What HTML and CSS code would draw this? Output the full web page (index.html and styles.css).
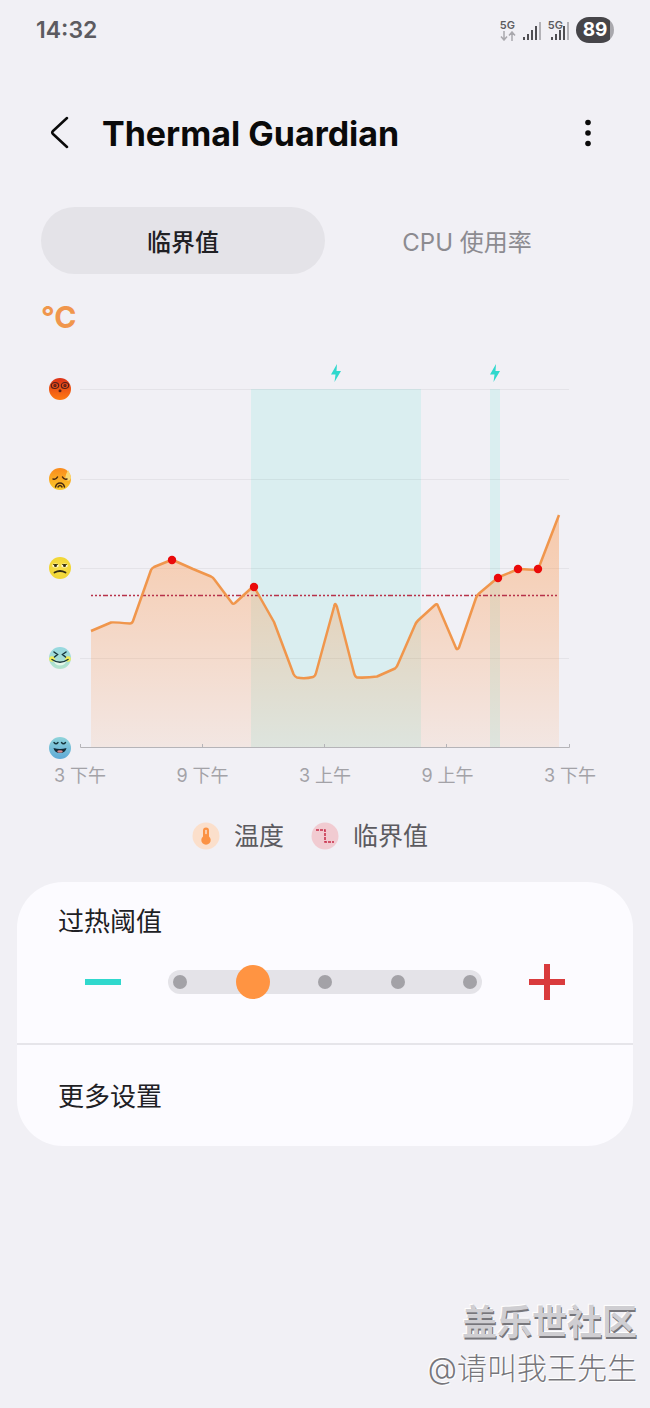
FILE: index.html
```html
<!DOCTYPE html>
<html lang="zh-CN">
<head>
    <meta charset="UTF-8">
    <meta name="viewport" content="width=device-width, initial-scale=1.0">
    <title>Thermal Guardian</title>
    <link rel="stylesheet" href="styles.css">
</head>
<body>

<!-- Status bar -->
<div class="status-bar">
    <span class="clock">14:32</span>
    <div class="status-icons">
        <div class="network">
            <span>5G</span>
            <svg width="16" height="10" viewBox="0 0 16 10" fill="none" stroke="#a9a8ad" stroke-width="1.500">
                <path d="M4 0v8.500M1 5.500l3 3.500L7 5.500M12 10V1.500M9 4.500l3-3.500L15 4.500"/>
            </svg>
        </div>
        <svg class="signal" width="18" height="18" viewBox="0 0 18 18">
            <path fill="#4f4e52" d="M0 15h2v3H0zM4 12h2v6H4zM8 8h2v10H8zM12 4h2v14h-2z"/>
            <path fill="#b3b2b7" d="M16 0h2v18h-2z"/>
        </svg>
        <div class="network network-2">
            <span>5G</span>
            <svg class="signal" width="18" height="18" viewBox="0 0 18 18">
                <path fill="#4f4e52" d="M0 15h2v3H0zM4 12h2v6H4zM8 8h2v10H8zM12 4h2v14h-2z"/>
                <path fill="#b3b2b7" d="M16 0h2v18h-2z"/>
            </svg>
        </div>
        <span class="battery">89</span>
    </div>
</div>

<!-- Title -->
<header class="header">
    <button type="button" class="icon-btn" aria-label="返回">
        <svg width="20" height="34" viewBox="0 0 20 34" fill="none" stroke="#0a0a0a" stroke-width="2.5" stroke-linecap="round" stroke-linejoin="round">
            <path d="M17 2L3 15q-1.500 1.500 0 3L17 31"/>
        </svg>
    </button>
    <h1>Thermal Guardian</h1>
    <button type="button" class="icon-btn" aria-label="更多选项">
        <svg width="8" height="28" viewBox="0 0 8 28" fill="#0a0a0a">
            <circle cx="4" cy="3.5" r="2.8"/><circle cx="4" cy="14" r="2.8"/><circle cx="4" cy="24.5" r="2.8"/>
        </svg>
    </button>
</header>

<div class="tabs">
    <button type="button" class="tab active">临界值</button>
    <button type="button" class="tab">CPU 使用率</button>
</div>

<!-- Temperature chart -->
<section class="chart">
    <h2>°C</h2>
    <svg class="plot" viewBox="0 0 650 410">
        <defs>
            <linearGradient id="heat" gradientUnits="userSpaceOnUse" x1="0" y1="165" x2="0" y2="398">
                <stop offset="0" stop-color="#ff8f3c" stop-opacity=".4"/>
                <stop offset="1" stop-color="#ff8f3c" stop-opacity=".1"/>
            </linearGradient>
            <linearGradient id="red" x1="0" y1="0" x2="0" y2="1">
                <stop offset="0" stop-color="#dc3218"/><stop offset="1" stop-color="#ff7a12"/>
            </linearGradient>
            <linearGradient id="amber" x1="0" y1="0" x2="0" y2="1">
                <stop offset="0" stop-color="#fa8a1c"/><stop offset="1" stop-color="#fbcb2c"/>
            </linearGradient>
            <radialGradient id="yellow">
                <stop offset="0" stop-color="#f8df4c"/><stop offset="1" stop-color="#f1d634"/>
            </radialGradient>
            <linearGradient id="mint" x1="0" y1="0" x2="0" y2="1">
                <stop offset="0" stop-color="#96d8e0"/><stop offset="1" stop-color="#b4e3cc"/>
            </linearGradient>
            <linearGradient id="blue" x1="0" y1="0" x2="0" y2="1">
                <stop offset="0" stop-color="#8fd4da"/><stop offset="1" stop-color="#5fa9d6"/>
            </linearGradient>
        </defs>

        <!-- charging periods -->
        <g fill="#daeef0">
            <rect x="251" y="39" width="170" height="359"/>
            <rect x="490" y="39" width="10" height="359"/>
        </g>
        <g fill="#30d8cd">
            <path id="bolt" d="M337 14l-6 10.500h4.500L334.500 32l6.500-11h-4.500z"/>
            <use href="#bolt" x="159"/>
        </g>

        <path d="M80 39.500H569M80 129.500H569M80 218.500H569M80 308.500H569" stroke="#000" stroke-opacity=".05"/>

        <path fill="url(#heat)" d="M91 281L111 272.500Q113 272 130 273.500Q132 273.500 133 271L151 220Q152 218 154 217L170 210.500Q172 209.500 174 210.500L193 219L211 226.500Q213 227.500 214 229L232 253Q233 254.500 235 253L252 237.500Q254 236 255 238.500L274 272L293.500 324Q295 327 297 327.500Q305 329 313 327Q315 326.500 316 323L334 257Q335 251 337 257L354 323Q355 327 357 327.500Q367 328 377 326.500L395 318.500Q397 317 398 314L415 275Q416 272.500 418 270.500L435 255Q437 253 438 256L456 298Q457 300.500 459 297.500L476 248Q477 245.500 479 243.500L498 227.500L516 220Q518 219 520 219L536 220Q538 220 539 217L559 165V398H91z"/>
        <path fill="none" stroke="#b8324a" stroke-width="1.600" stroke-dasharray="2 2 2 2 2 2 5 2" d="M91 245.500H559"/>
        <path fill="none" stroke="#f0964c" stroke-width="2.500" stroke-linejoin="round" d="M91 281L111 272.500Q113 272 130 273.500Q132 273.500 133 271L151 220Q152 218 154 217L170 210.500Q172 209.500 174 210.500L193 219L211 226.500Q213 227.500 214 229L232 253Q233 254.500 235 253L252 237.500Q254 236 255 238.500L274 272L293.500 324Q295 327 297 327.500Q305 329 313 327Q315 326.500 316 323L334 257Q335 251 337 257L354 323Q355 327 357 327.500Q367 328 377 326.500L395 318.500Q397 317 398 314L415 275Q416 272.500 418 270.500L435 255Q437 253 438 256L456 298Q457 300.500 459 297.500L476 248Q477 245.500 479 243.500L498 227.500L516 220Q518 219 520 219L536 220Q538 220 539 217L559 165"/>

        <g fill="#ea0a0a">
            <circle cx="172" cy="210" r="4.200"/>
            <circle cx="254" cy="237" r="4.200"/>
            <circle cx="498" cy="228" r="4.200"/>
            <circle cx="518" cy="219" r="4.200"/>
            <circle cx="538" cy="219" r="4.200"/>
        </g>

        <path fill="none" stroke="#b5b4b8" d="M80.500 394V397.500H569.500V394M202.500 394v4M324.500 394v4M446.500 394v4"/>

        <!-- faces, hot to cold -->
        <g transform="translate(60 39)">
            <circle r="11" fill="url(#red)"/>
            <g fill="none" stroke="#54201c" stroke-width="1.200">
                <ellipse cx="-5" cy="-3.500" rx="3.700" ry="3"/><ellipse cx="5" cy="-3.500" rx="3.700" ry="3"/>
                <circle cx="-5" cy="-3.500" r="1"/><circle cx="5" cy="-3.500" r="1"/>
            </g>
            <circle cy="1.800" r="1.500" fill="#54201c"/>
        </g>
        <g transform="translate(60 129)">
            <circle r="11" fill="url(#amber)"/>
            <path fill="#f9d873" d="M8-9Q4-1 6 1Q10 3 11-1Q11-4 8-9z"/>
            <g fill="none" stroke="#4a2a10" stroke-width="1.500" stroke-linecap="round">
                <path d="M-7 0Q-4 1-2.500-2M2.500-2Q4 1 7 0"/>
                <path d="M-4.500 8Q-3.500 4 0 4Q3.500 4 4.500 8M-2 8Q0 5 2 8"/>
            </g>
        </g>
        <g transform="translate(60 218)">
            <circle r="11" fill="url(#yellow)"/>
            <ellipse cx="-4.500" cy="-2.500" rx="3.200" ry="2" fill="#fff8cd"/><ellipse cx="4.500" cy="-2.500" rx="3.200" ry="2" fill="#fff8cd"/>
            <path d="M-7-3.500h5M2-3.500h5" stroke="#675a16"/>
            <circle cx="-4.500" cy="-2.500" r="1.500" fill="#332d12"/><circle cx="4.500" cy="-2.500" r="1.500" fill="#332d12"/>
            <path d="M-5.500 4.500Q0 1.500 5.500 4.500" fill="none" stroke="#332d12" stroke-width="1.800" stroke-linecap="round"/>
        </g>
        <g transform="translate(60 308)">
            <circle r="11" fill="url(#mint)"/>
            <circle cx="-8" cy="1" r="2.800" fill="#f1ed5a"/><circle cx="8" cy="1" r="2.800" fill="#f1ed5a"/>
            <path d="M-7 2Q0 6 7 2Q5 7.500 0 7.500Q-5 7.500-7 2z" fill="#e6f7e9"/>
            <path d="M-6-6l3.500 2.500L-5.500-1M6-6L2.500-3.500L5.500-1M-8 1.500Q0 7 8 1.500" fill="none" stroke="#17353c" stroke-width="1.500" stroke-linecap="round"/>
        </g>
        <g transform="translate(60 398)">
            <circle r="11" fill="url(#blue)"/>
            <path d="M-6-5.500q2 2.500 4 0M1.500-5.500q2 2.500 4 0" fill="none" stroke="#17353c" stroke-width="1.400" stroke-linecap="round"/>
            <path d="M-6.500 0Q0 2 6.500 0Q5.500 5 0 5Q-5.500 5-6.500 0z" fill="#122a35"/>
            <ellipse cy="3.500" rx="2.800" ry="1.200" fill="#d98a90"/>
        </g>
    </svg>
    <div class="hours">
        <span>3 下午</span>
        <span>9 下午</span>
        <span>3 上午</span>
        <span>9 上午</span>
        <span>3 下午</span>
    </div>
    <div class="legend">
        <div class="legend-item">
            <svg width="28" height="28" viewBox="0 0 28 28">
                <circle cx="14" cy="14" r="13.500" fill="#fbdfcb"/>
                <path fill="#fb9244" d="M11 8.500a3 3 0 0 1 6 0v6a4.700 4.700 0 1 1-6 0z"/>
                <path stroke="#fbdfcb" stroke-width="1.500" stroke-linecap="round" d="M14 8.500v3"/>
            </svg>
            <span>温度</span>
        </div>
        <div class="legend-item">
            <svg width="28" height="28" viewBox="0 0 28 28">
                <circle cx="14" cy="14" r="13.500" fill="#f1cbd1"/>
                <path fill="none" stroke="#c62b47" stroke-width="1.500" stroke-dasharray="3 1" d="M5 8h9v12h9"/>
            </svg>
            <span>临界值</span>
        </div>
    </div>
</section>

<!-- Settings card -->
<div class="card">
    <div class="threshold">
        <label for="threshold">过热阈值</label>
        <div class="controls">
            <button type="button" class="icon-btn" aria-label="降低">
                <svg width="36" height="36" viewBox="0 0 36 36"><path fill="#30d8cd" d="M0 15h36v6H0z"/></svg>
            </button>
            <div class="slider">
                <div class="ticks"><i></i><i></i><i></i><i></i><i></i></div>
                <input type="range" id="threshold" min="0" max="4" step="1" value="1">
            </div>
            <button type="button" class="icon-btn" aria-label="提高">
                <svg width="36" height="36" viewBox="0 0 36 36"><path fill="#d93b3d" d="M0 15h15V0h6v15h15v6H21v15h-6V21H0z"/></svg>
            </button>
        </div>
    </div>
    <a href="#more" class="more">更多设置</a>
</div>

<footer class="credit">
    <strong>盖乐世社区</strong>
    <span>@请叫我王先生</span>
</footer>

</body>
</html>
```
FILE: styles.css
```css
* {
    box-sizing: border-box;
}
body {
    font-family: Inter, "Noto Sans CJK SC", sans-serif;
    background-color: #f1f0f5;
    color: #202024;
    margin: 0;
    min-height: 100vh;
    display: flex;
    flex-direction: column;
}
button {
    font-family: inherit;
    background: none;
    border: none;
    padding: 0;
    cursor: pointer;
}
svg {
    display: block;
}

/* Status bar */
.status-bar {
    display: flex;
    justify-content: space-between;
    align-items: center;
    height: 60px;
    padding: 0 36px;
    color: #5c5b60;
}
.clock {
    font-size: 23px;
    font-weight: 600;
}
.status-icons {
    display: flex;
    align-items: center;
    gap: 7px;
}
.network {
    font-size: 11px;
    font-weight: 600;
    line-height: 12px;
}
.network-2 {
    display: flex;
    align-items: flex-start;
}
.network-2 span {
    margin-right: -12px;
    line-height: 10px;
}
.signal {
    margin-top: 2px;
}
.battery {
    width: 38px;
    height: 26px;
    border-radius: 13px;
    background: linear-gradient(90deg, #464549 89%, #a9a8ad 89%);
    color: #fff;
    font-size: 19px;
    font-weight: 700;
    line-height: 26px;
    text-align: center;
}

/* Header */
.header {
    display: flex;
    align-items: center;
    height: 84px;
    margin-top: 31px;
    padding: 0 40px 0 38px;
}
.icon-btn {
    display: flex;
    align-items: center;
    justify-content: center;
    width: 44px;
    height: 48px;
}
h1 {
    flex: 1;
    margin: 0 0 0 20px;
    color: #0a0a0a;
    font-size: 34px;
    font-weight: 700;
}

/* Tabs */
.tabs {
    display: flex;
    margin-top: 32px;
    padding: 0 41px;
}
.tab {
    flex: 1;
    height: 67px;
    border-radius: 34px;
    color: #8c8b90;
    font-size: 24px;
}
.tab.active {
    background-color: #e4e3e8;
    color: #202024;
    font-weight: 500;
}

/* Chart */
h2 {
    margin: 25px 41px 0;
    color: #f0964c;
    font-size: 30px;
    font-weight: 700;
    line-height: 36px;
}
.plot {
    width: 100%;
    margin-top: 15px;
}
.hours {
    display: flex;
    justify-content: space-between;
    margin: 0 50px;
    color: #a3a2a7;
    font-size: 18px;
    line-height: 32px;
}
.hours span {
    width: 60px;
    text-align: center;
}
.legend {
    display: flex;
    justify-content: center;
    gap: 27px;
    margin-top: 24px;
    padding-right: 30px;
    color: #5c5b60;
    font-size: 25px;
    line-height: 40px;
}
.legend-item {
    display: flex;
    align-items: center;
    gap: 14px;
}

/* Settings card */
.card {
    margin: 26px 17px 0;
    background-color: #fcfbff;
    border-radius: 46px;
    font-size: 26px;
}
.threshold {
    padding: 20px 41px 37px;
    border-bottom: 2px solid #e6e5ea;
}
.threshold label {
    display: block;
    line-height: 40px;
}
.controls {
    display: flex;
    align-items: center;
    gap: 38px;
    margin-top: 16px;
    padding: 0 23px;
}
.slider {
    flex: 1;
    display: grid;
    align-items: center;
}
.ticks {
    grid-area: 1 / 1;
    display: flex;
    justify-content: space-between;
    align-items: center;
    height: 24px;
    margin: 0 5px;
    padding: 0 5px;
    border-radius: 12px;
    background-color: #e4e3e8;
}
.ticks i {
    width: 14px;
    height: 14px;
    border-radius: 50%;
    background-color: #a3a2a7;
}
.slider input {
    grid-area: 1 / 1;
    width: 100%;
    height: 34px;
    margin: 0;
    background: none;
    -webkit-appearance: none;
    appearance: none;
}
.slider input::-webkit-slider-thumb {
    -webkit-appearance: none;
    width: 34px;
    height: 34px;
    border-radius: 50%;
    background-color: #ff9442;
}
.more {
    display: block;
    padding: 3px 41px 0;
    color: #202024;
    line-height: 98px;
    text-decoration: none;
}

/* Credit */
.credit {
    display: flex;
    flex-direction: column;
    align-items: flex-end;
    margin-top: auto;
    padding: 0 13px 18px;
    color: #77767b;
    text-shadow: -1px -1px 1px #fff, 1px 1px 1px #fff;
}
.credit strong {
    color: #cfced2;
    font-size: 35px;
    line-height: 48px;
    text-shadow: 1px 2px 0 #77767b, -1px -1px 1px #fff;
}
.credit span {
    font-size: 30px;
    font-weight: 300;
    line-height: 44px;
}
```
